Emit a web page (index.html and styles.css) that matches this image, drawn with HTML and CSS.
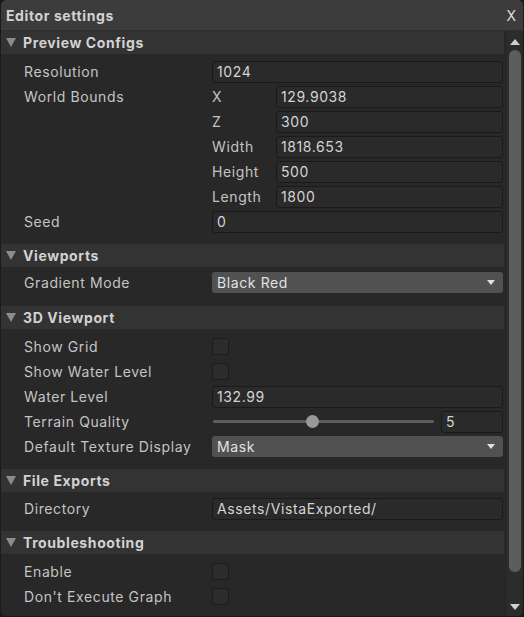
FILE: index.html
```html
<!DOCTYPE html>
<html lang="en">
<head>
  <meta charset="UTF-8" />
  <title>Editor settings</title>
  <link rel="stylesheet" href="styles.css">
</head>
<body>
  <div class="window">
    <div class="titlebar">
      <span class="title">Editor settings</span>
      <span class="close">X</span>
    </div>

    <div class="body">
      <div class="content">

        <div class="section">
          <div class="section-head"><span class="fold"></span>Preview Configs</div>
          <div class="section-body">
            <div class="row"><label>Resolution</label><div class="field">1024</div></div>
            <div class="row"><label>World Bounds</label>
              <div class="sub"><span>X</span><div class="field">129.9038</div></div>
            </div>
            <div class="row"><label></label><div class="sub"><span>Z</span><div class="field">300</div></div></div>
            <div class="row"><label></label><div class="sub"><span>Width</span><div class="field">1818.653</div></div></div>
            <div class="row"><label></label><div class="sub"><span>Height</span><div class="field">500</div></div></div>
            <div class="row"><label></label><div class="sub"><span>Length</span><div class="field">1800</div></div></div>
            <div class="row"><label>Seed</label><div class="field">0</div></div>
          </div>
        </div>

        <div class="section">
          <div class="section-head"><span class="fold"></span>Viewports</div>
          <div class="section-body tight">
            <div class="row"><label>Gradient Mode</label><div class="dropdown">Black Red<span class="caret"></span></div></div>
          </div>
        </div>

        <div class="section">
          <div class="section-head"><span class="fold"></span>3D Viewport</div>
          <div class="section-body">
            <div class="row"><label>Show Grid</label><div class="check"></div></div>
            <div class="row"><label>Show Water Level</label><div class="check"></div></div>
            <div class="row"><label>Water Level</label><div class="field">132.99</div></div>
            <div class="row"><label>Terrain Quality</label>
              <div class="slider">
                <div class="track"><div class="knob" style="left: 45%"></div></div>
                <div class="field small">5</div>
              </div>
            </div>
            <div class="row"><label>Default Texture Display</label><div class="dropdown">Mask<span class="caret"></span></div></div>
          </div>
        </div>

        <div class="section">
          <div class="section-head"><span class="fold"></span>File Exports</div>
          <div class="section-body single">
            <div class="row"><label>Directory</label><div class="field">Assets/VistaExported/</div></div>
          </div>
        </div>

        <div class="section">
          <div class="section-head"><span class="fold"></span>Troubleshooting</div>
          <div class="section-body">
            <div class="row"><label>Enable</label><div class="check"></div></div>
            <div class="row"><label>Don't Execute Graph</label><div class="check"></div></div>
          </div>
        </div>

      </div>

      <div class="scrollbar">
        <span class="arrow up"></span>
        <div class="thumb"></div>
        <span class="arrow down"></span>
      </div>
    </div>
  </div>
</body>
</html>
```

FILE: styles.css
```css
* { box-sizing: border-box; margin: 0; padding: 0; }
html, body {
  width: 524px;
  height: 617px;
  background: #191919;
  overflow: hidden;
}
body {
  font-family: Inter, 'Noto Sans', sans-serif;
  font-size: 14px;
  letter-spacing: 0.6px;
  color: #c4c4c4;
}
.window {
  width: 524px;
  height: 617px;
  display: flex;
  flex-direction: column;
  background: #282828;
  border-radius: 6px;
  border: 1px solid #1b1b1b;
  border-top: none;
  overflow: hidden;
}
.titlebar {
  height: 31px;
  flex: none;
  display: flex;
  align-items: center;
  justify-content: space-between;
  padding: 0 7px 0 5px;
  background: #3c3c3c;
  border-bottom: 1px solid #2f2f2f;
}
.title {
  font-weight: 700;
  color: #d2d2d2;
}
.close {
  color: #dcdcdc;
  font-size: 14px;
  letter-spacing: 0;
}
.body {
  flex: 1;
  display: flex;
  min-height: 0;
}
.content {
  flex: 1;
  padding-right: 3px;
}
.section-head {
  height: 23px;
  display: flex;
  align-items: center;
  padding-left: 5px;
  background: #333333;
  font-weight: 700;
  color: #d2d2d2;
}
.fold {
  width: 0;
  height: 0;
  border-left: 5px solid transparent;
  border-right: 5px solid transparent;
  border-top: 9px solid #8c8c8c;
  margin-right: 7px;
}
.section-body {
  padding: 5px 0 10px 0;
}
.section-body.tight {
  padding: 3px 0 11px 0;
}
.section-body.single {
  padding: 4px 0 10px 0;
}
.row {
  height: 25px;
  display: flex;
  align-items: center;
  padding-left: 23px;
}
.row label {
  width: 188px;
  flex: none;
}
.field {
  flex: 1;
  height: 22px;
  line-height: 20px;
  padding-left: 4px;
  background: #2a2a2a;
  border: 1px solid #1a1a1a;
  border-radius: 3px;
  color: #d4d4d4;
  margin-right: 1px;
}
.sub {
  flex: 1;
  display: flex;
  align-items: center;
}
.sub span {
  width: 64px;
}
.dropdown {
  flex: 1;
  position: relative;
  height: 21px;
  line-height: 21px;
  padding-left: 5px;
  background: #515151;
  border-radius: 3px;
  color: #e2e2e2;
  margin-right: 1px;
}
.caret {
  position: absolute;
  right: 8px;
  top: 8px;
  border-left: 4.5px solid transparent;
  border-right: 4.5px solid transparent;
  border-top: 5px solid #e0e0e0;
}
.check {
  width: 17px;
  height: 17px;
  background: #2c2c2c;
  border: 1px solid #1c1c1c;
  border-radius: 2px;
}
.slider {
  flex: 1;
  display: flex;
  align-items: center;
  gap: 7px;
}
.track {
  flex: 1;
  height: 3px;
  background: #5e5e5e;
  border-radius: 2px;
  position: relative;
  margin-left: 1px;
}
.knob {
  position: absolute;
  top: -5px;
  width: 13px;
  height: 13px;
  margin-left: -6px;
  background: #999999;
  border-radius: 50%;
}
.field.small {
  flex: none;
  width: 62px;
}
.scrollbar {
  width: 15px;
  flex: none;
  display: flex;
  flex-direction: column;
  align-items: center;
  background: #2c2c2c;
  padding: 8px 0 6px;
  margin-right: 1px;
}
.arrow {
  width: 0;
  height: 0;
  border-left: 5px solid transparent;
  border-right: 5px solid transparent;
}
.arrow.up {
  border-bottom: 6px solid #d0d0d0;
}
.arrow.down {
  border-top: 6px solid #d0d0d0;
}
.thumb {
  width: 12px;
  height: 522px;
  margin: 5px 0 auto;
  background: #5d5d5d;
  border-radius: 6px;
}
```
